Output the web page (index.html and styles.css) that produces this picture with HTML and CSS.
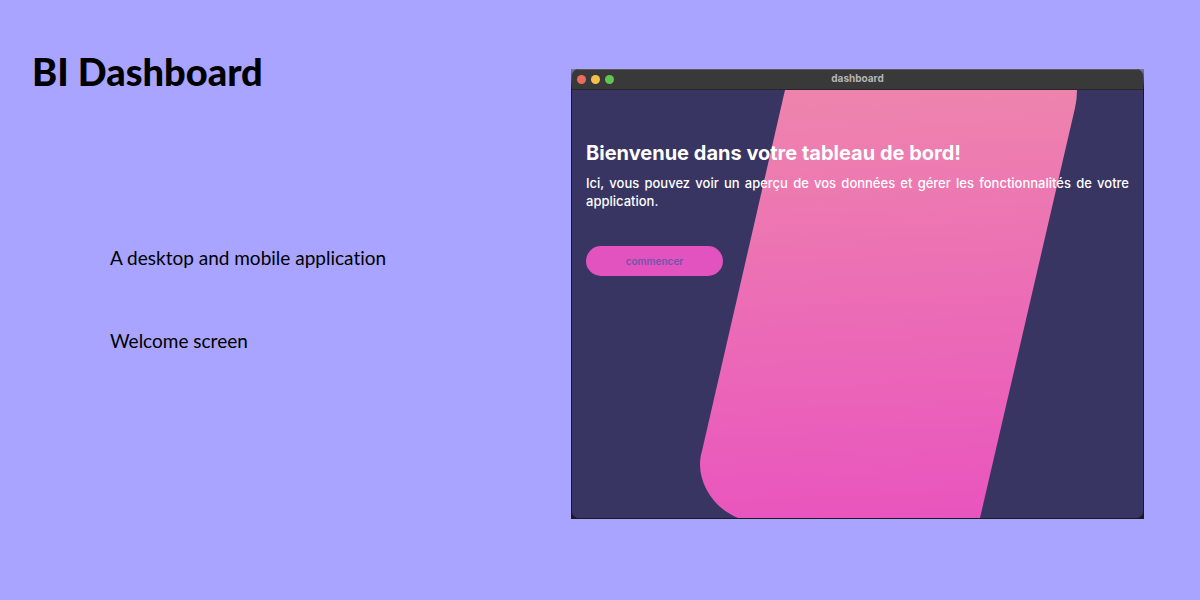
FILE: index.html
```html
<!DOCTYPE html>
<html lang="en">
<head>
<meta charset="utf-8">
<meta name="viewport" content="width=device-width, initial-scale=1">
<title>BI Dashboard</title>
<link rel="stylesheet" href="styles.css">
</head>
<body>
<main class="slide">
  <section class="intro">
    <h1 class="title">BI Dashboard</h1>
    <div class="notes">
      <p>A desktop and mobile application</p>
      <p>Welcome screen</p>
    </div>
  </section>
  <section class="showcase" lang="fr">
    <div class="frame">
      <div class="window">
        <header class="titlebar">
          <div class="lights"><span class="light red"></span><span class="light yellow"></span><span class="light green"></span></div>
          <span class="name">dashboard</span>
        </header>
        <div class="screen">
          <svg class="backdrop" viewBox="0 0 571 428" preserveAspectRatio="none" aria-hidden="true">
            <defs>
              <linearGradient id="pink" x1="0.48" y1="0" x2="0.52" y2="1">
                <stop offset="0" stop-color="#ee84ad"/>
                <stop offset="1" stop-color="#e955be"/>
              </linearGradient>
            </defs>
            <path fill="url(#pink)" d="M213 0H505Q505 9 503 18L408 428H166C139 417 122 387 130 361Z"/>
          </svg>
          <div class="content">
            <h2 class="welcome">Bienvenue dans votre tableau de bord!</h2>
            <p class="lead">Ici, vous pouvez voir un aperçu de vos données et gérer les fonctionnalités de votre application.</p>
            <button class="start" type="button">commencer</button>
          </div>
        </div>
      </div>
    </div>
  </section>
</main>
</body>
</html>
```
FILE: styles.css
```css
* { box-sizing: border-box; }
body { margin: 0; background: #a8a4ff; color: #000; font-family: Lato, sans-serif; }
h1, h2, p { margin: 0; }
.slide {
  min-height: 100vh;
  display: grid;
  grid-template-columns: minmax(0, 539fr) minmax(0, 573fr);
  padding: 48px 56px 48px 32px;
}
.title { font-size: 38px; line-height: 46px; font-weight: 900; }
.notes { display: grid; gap: 55px; padding: 150px 0 0 78px; font-size: 19px; line-height: 28px; font-variant-ligatures: none; }
.showcase { padding-top: 21px; }
.frame {
  padding: 0 1px 1px;
  background: linear-gradient(#77799a, #1b1a20 20px);
}
.window {
  border-radius: 7px;
  overflow: hidden;
  font-family: Inter, sans-serif;
  background: #383563;
}
.titlebar {
  height: 21px;
  display: grid;
  grid-template-columns: 1fr auto 1fr;
  align-items: center;
  padding: 0 5px;
  background: #393939;
  border-top: 1px solid #595959;
  border-bottom: 1px solid #28272c;
}
.lights { display: flex; gap: 5px; }
.light { width: 9px; height: 9px; border-radius: 50%; }
.red { background: #ed6a5e; }
.yellow { background: #f5bf4f; }
.green { background: #61c554; }
.name { padding-bottom: 3px; color: #b5b5b5; font-size: 10px; line-height: 14px; font-weight: 700; }
.screen { position: relative; min-height: 428px; background: #383563; }
.backdrop { position: absolute; inset: 0; width: 100%; height: 100%; }
.content { position: relative; padding: 49px 14px; color: #fff; }
.welcome { font-size: 20px; line-height: 28px; font-weight: 700; }
.lead { margin-top: 7px; font-size: 13px; line-height: 18px; font-weight: 500; text-align: justify; }
.start {
  margin-top: 36px;
  width: 137px;
  height: 30px;
  padding: 0;
  border: 0;
  border-radius: 15px;
  background: #e353bf;
  color: #7454ab;
  font: 600 10px/14px Inter, sans-serif;
}
```
